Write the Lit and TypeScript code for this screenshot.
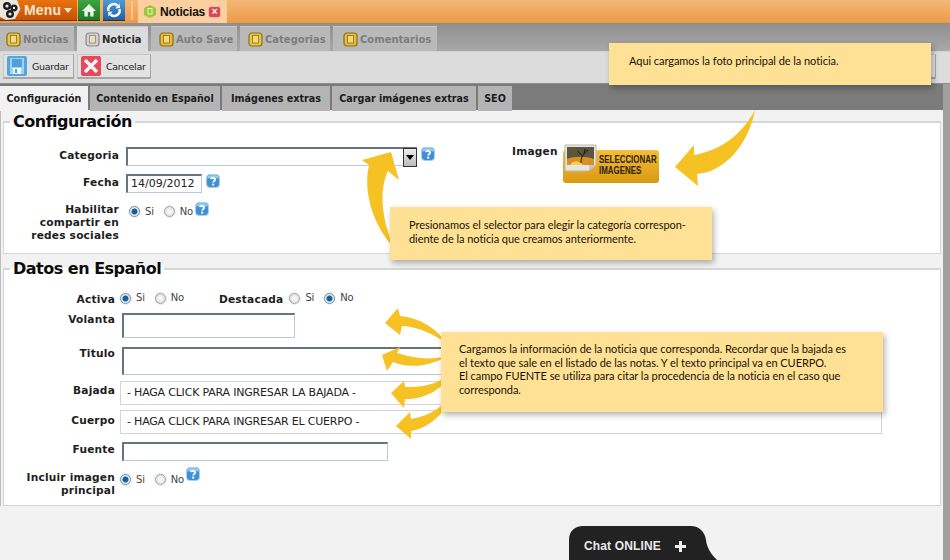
import { LitElement, html, css, svg } from 'lit';
import { customElement } from 'lit/decorators.js';

const help = html`<svg class="help" width="14" height="14" viewBox="0 0 14 14"><rect x=".5" y=".5" width="13" height="13" rx="3.5" fill="#3f8fd2" stroke="#a9cfee"/><path d="M1.5 5C4 2.5 10 2.5 12.5 5V2.5L10 1.2H4L1.5 2.5Z" fill="#9dd0f5"/><path d="M4.8 5.2C5 3.6 9.2 3.4 9.2 5.6 9.2 7 7.2 7 7.2 8.6" fill="none" stroke="#fff" stroke-width="1.9"/><rect x="6.2" y="9.6" width="2" height="2" fill="#fff"/></svg>`;

const tabIcon = (bg: string, mark: string) => html`<svg width="15" height="15" viewBox="0 0 15 15"><rect x="1" y="1" width="13" height="13" rx="3" fill="${bg}" stroke="${mark}" stroke-width="1.2"/><rect x="4.5" y="3.5" width="6" height="7.5" fill="#f6e9a8" fill-opacity=".6" stroke="${mark}" stroke-width=".8"/></svg>`;

const radio = (on: boolean) => html`<span class="radio ${on ? 'on' : ''}"></span>`;

const arrows = [
  'M391 152 L362 160 L369 165 C363 190 372 225 395 249 C381 220 379 190 388 171 L399 180 Z',
  'M675 167 L694 145 L694 155 C722 150 742 134 755 110 C748 146 724 172 697 174 L698 186 Z',
  'M385 323 L398 308 L400 316 C420 318 437 328 448 345 C433 333 418 327 402 326 L400 335 Z',
  'M382 355 L400 347 L397 353 C415 359 432 360 447 356 C432 366 410 369 393 362 L387 371 Z',
  'M391 393 L404 381 L405 387 C425 388 442 382 454 371 C444 388 425 400 405 399 L404 408 Z',
  'M396 426 L410 412 L411 419 C430 416 444 406 453 393 C446 412 430 428 411 431 L411 439 Z',
];

@customElement('app-root')
class AppRoot extends LitElement {
  static styles = css`
    :host {
      display: block;
      position: relative;
      width: 950px;
      height: 560px;
      overflow: hidden;
      background: #f2f2f2;
      font-family: "DejaVu Sans", sans-serif;
      color: #111;
    }
    .topbar {
      height: 23px;
      display: flex;
      background: linear-gradient(#f3b878, #ee9a45);
    }
    .menu {
      width: 77px;
      height: 21px;
      box-sizing: border-box;
      display: flex;
      align-items: center;
      gap: 3px;
      background: linear-gradient(#e9730f, #c75200);
      border-bottom: 1px solid #6d3206;
      color: #fde4cf;
      font: bold 14px "Liberation Sans", sans-serif;
      letter-spacing: 0.2px;
    }
    .logo {
      width: 21px;
      height: 20px;
      flex: none;
    }
    .caret {
      border: 4px solid transparent;
      border-top: 5px solid #fde4cf;
      border-bottom: 0;
      margin-top: 1px;
    }
    .square {
      width: 22px;
      height: 21px;
      margin-left: 1px;
      display: flex;
      align-items: center;
      justify-content: center;
      border-bottom: 1px solid #333;
      box-sizing: border-box;
    }
    .square.home { background: linear-gradient(#3fa33f, #1e7a25); }
    .square.sync { background: linear-gradient(#4d9ad8, #1c62a8); margin-left: 3px; }
    .sep {
      width: 2px;
      height: 19px;
      margin: 1px 5px 0 6px;
      background: #f6c48c;
    }
    .open-tab {
      width: 89px;
      height: 23px;
      box-sizing: border-box;
      display: flex;
      align-items: center;
      padding: 0 0 0 5px;
      gap: 3px;
      background: #fbcf9f;
      font: bold 12px "Liberation Sans", sans-serif;
      letter-spacing: -0.2px;
    }
    .close {
      width: 13px;
      height: 12px;
      border-radius: 3px;
      background: #d8494f;
      border: 1px solid #f4b5b5;
      color: #fff;
      font: bold 10px/10px "Liberation Sans", sans-serif;
      text-align: center;
      box-sizing: border-box;
    }
    .tabs {
      height: 29px;
      box-sizing: border-box;
      padding: 3px 0 0 0;
      display: flex;
      gap: 3px;
      background: linear-gradient(#8f8f8f, #a8a8a8);
      border-bottom: 1px solid #d4d4d4;
    }
    .tab {
      height: 25px;
      box-sizing: border-box;
      display: flex;
      align-items: center;
      gap: 2px;
      padding: 0 0 0 8px;
      background: #b9b9b9;
      color: #7d7d7d;
      font: bold 10px "DejaVu Sans", sans-serif;
      border-top: 1px solid #c9c9c9;
    }
    .tab.first {
      padding-left: 6px;
    }
    .tab.last {
      padding-left: 10px;
    }
    .tab.active {
      height: 26px;
      background: #dcdcdc;
      color: #2a2a2a;
    }
    .toolbar {
      height: 31px;
      box-sizing: border-box;
      padding: 2px 14px 0 3px;
      display: flex;
      gap: 3px;
      background: #dcdcdc;
    }
    .btn {
      height: 25px;
      box-sizing: border-box;
      display: flex;
      align-items: center;
      gap: 5px;
      padding: 0 0 0 3px;
      background: #e2e2e2;
      border: 1px solid #c8c8c8;
      border-bottom: 2px solid #a6a6a6;
      border-right-color: #a6a6a6;
      font: 9.5px "DejaVu Sans", sans-serif;
      color: #222;
      letter-spacing: -0.3px;
    }
    .btn.spacer {
      margin-left: auto;
      width: 20px;
    }
    .subtabs {
      height: 27px;
      box-sizing: border-box;
      padding: 2px 0 0 0;
      display: flex;
      gap: 2px;
      background: #7b7b7b;
      border-top: 1px solid #8e8e8e;
    }
    .subtab {
      box-sizing: border-box;
      height: 25px;
      display: flex;
      align-items: center;
      justify-content: center;
      background: #b4b4b4;
      font: bold 9.6px "DejaVu Sans", sans-serif;
      color: #1c1c1c;
    }
    .subtab.active {
      background: #f2f2f2;
    }
    .content {
      border-left: 1px solid #bdbdbd;
      margin-right: 7px;
      padding: 2px 2px 0 2px;
    }
    .scroll {
      position: absolute;
      right: 0;
      top: 84px;
      width: 7px;
      height: 476px;
      background: #a0a0a0;
    }
    fieldset {
      margin: 0 0 5px 0;
      padding: 0;
      background: #fff;
      border: 1px solid #d6d6d6;
      border-top: 2px solid #d6d6d6;
      min-width: 0;
    }
    legend {
      margin-left: 6px;
      padding: 0 3px;
      font: bold 16px/20px "DejaVu Sans", sans-serif;
      letter-spacing: -0.5px;
      color: #0c0c0c;
    }
    .label {
      font: bold 10.6px/13px "DejaVu Sans", sans-serif;
      color: #1d1d1d;
      text-align: right;
      letter-spacing: 0.2px;
    }
    .config {
      height: 121px;
      box-sizing: border-box;
      padding-top: 15px;
      display: flex;
    }
    .config-left {
      width: 508px;
      flex: none;
      display: grid;
      grid-template-columns: 115px 1fr;
      column-gap: 7px;
      row-gap: 8px;
      align-content: start;
    }
    .input {
      box-sizing: border-box;
      background: #fff;
      border: 1px solid #b9ccd6;
      border-top: 2px solid #65757f;
      border-left: 2px solid #65757f;
      font: 11px "DejaVu Sans", sans-serif;
      color: #222;
    }
    .select-line {
      display: flex;
      align-items: flex-start;
      gap: 4px;
    }
    .select {
      width: 291px;
      height: 19px;
      display: flex;
      justify-content: flex-end;
    }
    .select-arrow {
      width: 14px;
      height: 19px;
      margin-top: -1px;
      margin-right: -1px;
      box-sizing: border-box;
      background: linear-gradient(#eee, #bbb);
      border: 1px solid #333;
      display: flex;
      align-items: center;
      justify-content: center;
      flex: none;
    }
    .select-arrow i {
      border: 4px solid transparent;
      border-top: 5px solid #000;
      border-bottom: 0;
    }
    .date {
      width: 76px;
      height: 19px;
      padding-left: 3px;
      line-height: 16px;
    }
    .opts {
      display: flex;
      align-items: center;
      font: 10px "DejaVu Sans", sans-serif;
      color: #444;
      letter-spacing: -0.2px;
    }
    .opts .help {
      margin: -4px 0 0 2px;
    }
    .opts.high .help {
      margin-top: -10px;
    }
    .radio {
      width: 11px;
      height: 11px;
      border-radius: 50%;
      box-sizing: border-box;
      border: 1px solid #a2a2a2;
      background: radial-gradient(#fdfdfd, #d8d8d8);
      box-shadow: 0 0 0 1px #ececec;
      flex: none;
      margin-right: 5px;
    }
    .radio.on {
      background: radial-gradient(circle, #17609a 0 2.5px, #e4eef6 3.5px);
      border-color: #6b8fa8;
    }
    .opts .gap {
      width: 10px;
    }
    .opts .up {
      margin-top: -3px;
    }
    .image-col {
      display: flex;
      align-items: flex-start;
      gap: 5px;
      margin-top: -2px;
    }
    .select-img {
      position: relative;
      width: 96px;
      height: 33px;
      margin-top: 5px;
      background: linear-gradient(#f4bd3a, #d9990f);
      border-radius: 3px;
      box-sizing: border-box;
      padding: 4px 0 0 36px;
      font: bold 11px/11px "Liberation Sans", sans-serif;
      color: #2e2206;
    }
    .select-img svg {
      position: absolute;
      left: 1px;
      top: -6px;
    }
    .select-img span {
      display: block;
      transform: scaleX(0.72);
      transform-origin: left;
      white-space: nowrap;
    }
    .datos {
      height: 226px;
      box-sizing: border-box;
      padding-top: 13px;
      display: grid;
      grid-template-columns: 111px 1fr;
      column-gap: 5px;
      align-content: start;
    }
    .active-row {
      display: flex;
      align-items: center;
      height: 13px;
    }
    .active-row .label {
      margin: 2px 6px 0 35px;
    }
    .field {
      margin-left: 2px;
      height: 25px;
    }
    .volanta { width: 173px; margin-top: 7px; }
    .titulo { width: 757px; height: 28px; margin-top: 9px; }
    .fuente { width: 266px; height: 19px; margin-top: 8px; }
    .rich {
      box-sizing: border-box;
      margin-right: 58px;
      height: 24px;
      border: 1px solid #d4d4d4;
      padding-left: 6px;
      font: 11px/22px "DejaVu Sans", sans-serif;
      color: #222;
      letter-spacing: -0.2px;
    }
    .callout {
      position: absolute;
      box-sizing: border-box;
      background: #fee195;
      box-shadow: 2px 3px 6px rgba(0, 0, 0, 0.3);
      font: 11px/13.5px "Lato", sans-serif;
      color: #1a1408;
      letter-spacing: -0.05px;
      white-space: pre;
    }
    .arrows {
      position: absolute;
      left: 0;
      top: 0;
    }
    .chat {
      position: absolute;
      left: 569px;
      top: 526px;
    }
    .chat-text {
      position: absolute;
      left: 15px;
      top: 13px;
      color: #e8e8e8;
      font: bold 12px "Liberation Sans", sans-serif;
      letter-spacing: 0.15px;
      white-space: nowrap;
    }
    .plus {
      position: absolute;
      left: 106px;
      top: 15px;
    }
  `;

  render() {
    return html`
      <div class="topbar">
        <div class="menu">
          <div class="logo">
            <svg width="21" height="20" viewBox="0 0 21 20"><path d="M0 0H17L20.5 9 15 19 6 20 0 17Z" fill="#ece7dc"/><g fill="none" stroke="#1f1f1f" stroke-width="2.4"><circle cx="7" cy="6" r="2.8"/><circle cx="14" cy="8" r="2.4"/><circle cx="10" cy="14" r="2.8"/></g></svg>
          </div>
          Menu<span class="caret"></span>
        </div>
        <div class="square home">
          <svg width="16" height="16" viewBox="0 0 16 16"><path d="M8 2 1 9h2.4v5.5h3.4V10h2.4v4.5h3.4V9H15Z" fill="#eaf6e6"/></svg>
        </div>
        <div class="square sync">
          <svg width="18" height="18" viewBox="0 0 18 18" fill="none" stroke="#fff" stroke-width="2.4"><path d="M3.5 10A5.5 5.5 0 0 1 12.5 4.5"/><path d="M14.5 8A5.5 5.5 0 0 1 5.5 13.5"/><path d="M10.5 7.5 15 7 14.5 2.5Z" fill="#fff" stroke="none"/><path d="M7.5 10.5 3 11 3.5 15.5Z" fill="#fff" stroke="none"/></svg>
        </div>
        <div class="sep"></div>
        <div class="open-tab">
          <svg width="14" height="15" viewBox="0 0 14 15"><path d="M7 1 13 4v7l-6 3-6-3V4Z" fill="#9cc63b"/><rect x="5" y="4.5" width="4" height="5.5" fill="none" stroke="#e8f4b8"/></svg>
          Noticias <span class="close">×</span>
        </div>
      </div>

      <div class="tabs">
        <div class="tab first" style="width:74px">${tabIcon('#e8c44a', '#8a7016')}Noticias</div>
        <div class="tab active" style="width:71px">${tabIcon('#d0d0d0', '#8a8a8a')}Noticia</div>
        <div class="tab" style="width:86px">${tabIcon('#e8b93a', '#8a7016')}Auto Save</div>
        <div class="tab" style="width:90px">${tabIcon('#e8c44a', '#8a7016')}Categorias</div>
        <div class="tab last" style="width:104px">${tabIcon('#e8b93a', '#8a7016')}Comentarios</div>
      </div>

      <div class="toolbar">
        <div class="btn" style="width:71px">
          <svg width="20" height="20" viewBox="0 0 20 20"><rect width="20" height="20" rx="2" fill="#52a6e0"/><path d="M3 2h14v16H3Z" fill="#9fd2f4"/><path d="M5 3h10v8H5Z" fill="#4e9fda"/><path d="M6 12h8v6H6Z" fill="#f2f8fc"/><path d="M8 13h2v4H8Z" fill="#4e9fda"/></svg>
          Guardar
        </div>
        <div class="btn" style="width:74px">
          <svg width="20" height="20" viewBox="0 0 20 20"><rect width="20" height="20" rx="2" fill="#e7485c"/><path d="M4 4 16 16M16 4 4 16" stroke="#f5f5f5" stroke-width="3.4"/></svg>
          Cancelar
        </div>
        <div class="btn spacer"></div>
      </div>

      <div class="subtabs">
        <div class="subtab active" style="width:88px">Configuración</div>
        <div class="subtab" style="width:130px">Contenido en Español</div>
        <div class="subtab" style="width:108px">Imágenes extras</div>
        <div class="subtab" style="width:144px">Cargar imágenes extras</div>
        <div class="subtab" style="width:34px">SEO</div>
      </div>

      <div class="content">
        <fieldset>
          <legend>Configuración</legend>
          <div class="config">
            <div class="config-left">
              <div class="label" style="margin-top:2px">Categoria</div>
              <div class="select-line">
                <div class="input select"><div class="select-arrow"><i></i></div></div>
                ${help}
              </div>
              <div class="label" style="margin-top:2px">Fecha</div>
              <div class="select-line">
                <div class="input date">14/09/2012</div>
                ${help}
              </div>
              <div class="label" style="margin-top:2px">Habilitar compartir en redes sociales</div>
              <div class="opts" style="align-self:start;margin:3px 0 0 3px;height:14px">
                ${radio(true)}Si<span class="gap"></span>${radio(false)}No${help}
              </div>
            </div>
            <div class="image-col">
              <div class="label">Imagen</div>
              <div class="select-img">
                <svg width="34" height="28" viewBox="0 0 34 28"><path d="M1 1h31v20l-7 6H1Z" fill="#e6e6e0" stroke="#b9b9b0"/><rect x="3" y="3" width="27" height="18" fill="#5b5540"/><path d="M3 15C10 12 22 12 30 15v6H3Z" fill="#d89022"/><path d="M6 21C9 16 15 16 19 21Z" fill="#f6cf4f"/><path d="M17 19C17 13 19 10 24 6M18.5 12l-5-5M20 10l1-5" stroke="#1d1708" fill="none"/><path d="M25 27 32 21H25Z" fill="#c8c8c0"/></svg>
                <span>SELECCIONAR</span><span>IMAGENES</span>
              </div>
            </div>
          </div>
        </fieldset>

        <fieldset style="margin-bottom:0">
          <legend>Datos en Español</legend>
          <div class="datos">
            <div class="label" style="margin-top:1px">Activa</div>
            <div class="active-row">
              <div class="opts">${radio(true)}<span class="up">Si</span><span class="gap"></span>${radio(false)}<span class="up">No</span></div>
              <div class="label">Destacada</div>
              <div class="opts">${radio(false)}<span class="up">Si</span><span class="gap"></span>${radio(true)}<span class="up">No</span></div>
            </div>
            <div class="label" style="margin-top:7px">Volanta</div>
            <div class="input field volanta"></div>
            <div class="label" style="margin-top:9px">Titulo</div>
            <div class="input field titulo"></div>
            <div class="label" style="margin-top:9px">Bajada</div>
            <div class="rich" style="margin-top:6px">- HAGA CLICK PARA INGRESAR LA BAJADA -</div>
            <div class="label" style="margin-top:9px">Cuerpo</div>
            <div class="rich" style="margin-top:5px">- HAGA CLICK PARA INGRESAR EL CUERPO -</div>
            <div class="label" style="margin-top:9px">Fuente</div>
            <div class="input field fuente"></div>
            <div class="label" style="margin-top:10px">Incluir imagen principal</div>
            <div class="opts high" style="margin-top:11px;align-self:start;height:14px">
              ${radio(true)}Si<span class="gap"></span>${radio(false)}No${help}
            </div>
          </div>
        </fieldset>
      </div>
      <div class="scroll"></div>

      <svg class="arrows" width="950" height="560" viewBox="0 0 950 560">
        ${arrows.map((d) => svg`<path d=${d} fill="#f6c223"/>`)}
      </svg>

      <div class="callout" style="left:609px;top:43px;width:322px;height:42px;padding:11px 0 0 20px">Aqui cargamos la foto principal de la noticia.</div>
      <div class="callout" style="left:390px;top:207px;width:322px;height:53px;padding:11px 0 0 19px">Presionamos el selector para elegir la categoría correspon-
diente de la noticia que creamos anteriormente.</div>
      <div class="callout" style="left:441px;top:332px;width:442px;height:80px;padding:10px 0 0 18px">Cargamos la información de la noticia que corresponda. Recordar que la bajada es
el texto que sale en el listado de las notas. Y el texto principal va en CUERPO.
El campo FUENTE se utiliza para citar la procedencia de la noticia en el caso que
corresponda.</div>

      <div class="chat">
        <svg width="150" height="34" viewBox="0 0 150 34"><path d="M0 34V14C0 5 6 0 14 0H122C130 0 136 6 137 14 138 22 142 28 148 34Z" fill="#222"/></svg>
        <div class="chat-text">Chat ONLINE</div>
        <svg class="plus" width="11" height="11" viewBox="0 0 11 11"><path d="M4 0h3v4h4v3H7v4H4V7H0V4h4Z" fill="#eee"/></svg>
      </div>
    `;
  }
}
